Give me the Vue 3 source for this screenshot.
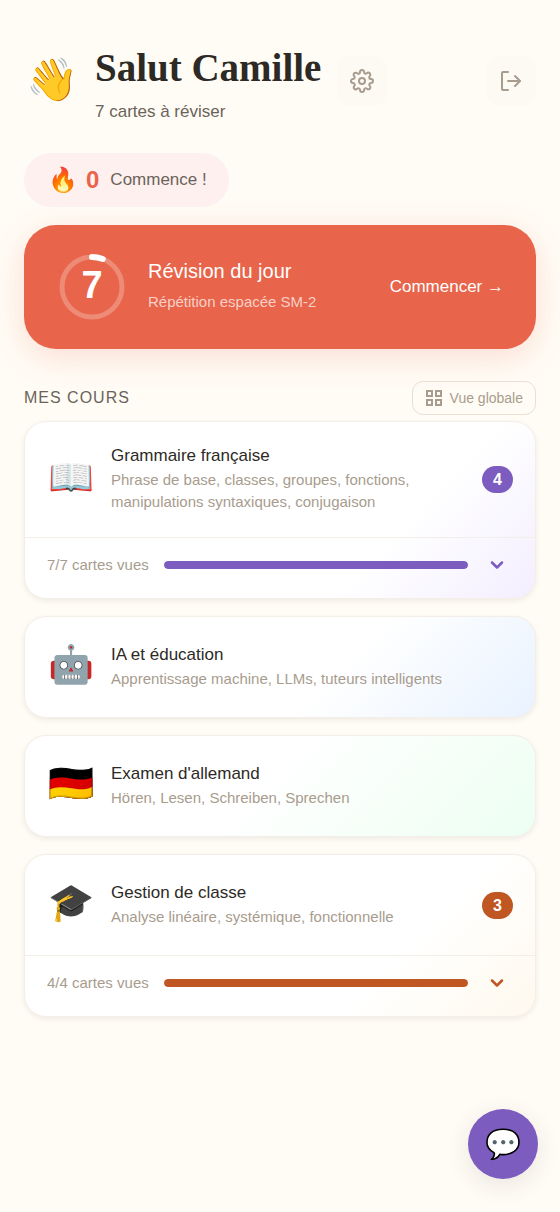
<template>
  <div class="dashboard">
    <!-- En-tête -->
    <header class="header">
      <span class="header-emoji" aria-hidden="true">👋</span>
      <div class="header-text">
        <h1 class="greeting">Salut {{ userName }}</h1>
        <p class="due-count">{{ dueCount }} cartes à réviser</p>
      </div>
      <button class="icon-button" type="button" aria-label="Paramètres">
        <svg width="24" height="24" viewBox="0 0 24 24" fill="none" stroke="currentColor" stroke-width="2" stroke-linecap="round" stroke-linejoin="round">
          <circle cx="12" cy="12" r="3"></circle>
          <path d="M19.4 15a1.65 1.65 0 0 0 .33 1.82l.06.06a2 2 0 0 1 0 2.83 2 2 0 0 1-2.83 0l-.06-.06a1.65 1.65 0 0 0-1.82-.33 1.65 1.65 0 0 0-1 1.51V21a2 2 0 0 1-2 2 2 2 0 0 1-2-2v-.09A1.65 1.65 0 0 0 9 19.4a1.65 1.65 0 0 0-1.82.33l-.06.06a2 2 0 0 1-2.83 0 2 2 0 0 1 0-2.83l.06-.06a1.65 1.65 0 0 0 .33-1.82 1.65 1.65 0 0 0-1.51-1H3a2 2 0 0 1-2-2 2 2 0 0 1 2-2h.09A1.65 1.65 0 0 0 4.6 9a1.65 1.65 0 0 0-.33-1.82l-.06-.06a2 2 0 0 1 0-2.83 2 2 0 0 1 2.83 0l.06.06a1.65 1.65 0 0 0 1.82.33H9a1.65 1.65 0 0 0 1-1.51V3a2 2 0 0 1 2-2 2 2 0 0 1 2 2v.09a1.65 1.65 0 0 0 1 1.51 1.65 1.65 0 0 0 1.82-.33l.06-.06a2 2 0 0 1 2.83 0 2 2 0 0 1 0 2.83l-.06.06a1.65 1.65 0 0 0-.33 1.82V9a1.65 1.65 0 0 0 1.51 1H21a2 2 0 0 1 2 2 2 2 0 0 1-2 2h-.09a1.65 1.65 0 0 0-1.51 1z"></path>
        </svg>
      </button>
      <button class="icon-button logout" type="button" aria-label="Déconnexion">
        <svg width="24" height="24" viewBox="0 0 24 24" fill="none" stroke="currentColor" stroke-width="2" stroke-linecap="round" stroke-linejoin="round">
          <path d="M9 21H4a1 1 0 0 1-1-1V4a1 1 0 0 1 1-1h5"></path>
          <polyline points="16 7 21 12 16 17"></polyline>
          <line x1="21" y1="12" x2="9" y2="12"></line>
        </svg>
      </button>
    </header>

    <!-- Série de jours -->
    <div class="streak">
      <span class="streak-emoji" aria-hidden="true">🔥</span>
      <strong class="streak-count">{{ streak }}</strong>
      <span class="streak-label">Commence !</span>
    </div>

    <!-- Révision du jour -->
    <button class="review" type="button">
      <span class="ring">
        <svg class="ring-svg" viewBox="0 0 72 72" fill="none" stroke-width="5">
          <circle cx="36" cy="36" r="30" stroke="rgba(255, 255, 255, 0.25)"></circle>
          <circle cx="36" cy="36" r="30" stroke="#fff" stroke-width="6" stroke-linecap="round" stroke-dasharray="11 189" transform="rotate(-90 36 36)"></circle>
        </svg>
        <span class="ring-count">{{ dueCount }}</span>
      </span>
      <span class="review-text">
        <span class="review-title">Révision du jour</span>
        <span class="review-subtitle">Répétition espacée SM-2</span>
      </span>
      <span class="review-action">Commencer →</span>
    </button>

    <!-- Liste des cours -->
    <section class="courses">
      <div class="section-header">
        <h2 class="section-title">Mes cours</h2>
        <button class="overview-button" type="button">
          <svg width="20" height="20" viewBox="0 0 20 20" fill="none" stroke="currentColor" stroke-width="2">
            <rect x="3" y="3" width="5" height="5"></rect>
            <rect x="12" y="3" width="5" height="5"></rect>
            <rect x="3" y="12" width="5" height="5"></rect>
            <rect x="12" y="12" width="5" height="5"></rect>
          </svg>
          <span>Vue globale</span>
        </button>
      </div>

      <div class="course-list">
        <article v-for="course in courses" :key="course.id" class="course-card" :class="course.id">
          <a class="course-main" href="#">
            <span class="course-emoji" aria-hidden="true">{{ course.emoji }}</span>
            <span class="course-text">
              <span class="course-name">{{ course.name }}</span>
              <span class="course-description">{{ course.description }}</span>
            </span>
            <span v-if="course.due" class="course-badge">{{ course.due }}</span>
          </a>
          <div v-if="course.total" class="course-footer">
            <span class="course-seen">{{ course.seen }}/{{ course.total }} cartes vues</span>
            <div class="progress">
              <div class="progress-fill" :style="{ width: progress(course) }"></div>
            </div>
            <button class="expand-button" type="button" aria-label="Afficher le détail">
              <svg width="20" height="20" viewBox="0 0 24 24" fill="none" stroke="currentColor" stroke-width="3" stroke-linecap="round" stroke-linejoin="round">
                <polyline points="6 9 12 15 18 9"></polyline>
              </svg>
            </button>
          </div>
        </article>
      </div>
    </section>

    <button class="chat-button" type="button" aria-label="Ouvrir la discussion">💬</button>
  </div>
</template>

<script setup>
import { ref } from 'vue'

const userName = ref('Camille')
const dueCount = ref(7)
const streak = ref(0)

const courses = ref([
  {
    id: 'grammaire',
    emoji: '📖',
    name: 'Grammaire française',
    description: 'Phrase de base, classes, groupes, fonctions, manipulations syntaxiques, conjugaison',
    due: 4,
    seen: 7,
    total: 7
  },
  {
    id: 'ia',
    emoji: '🤖',
    name: 'IA et éducation',
    description: 'Apprentissage machine, LLMs, tuteurs intelligents'
  },
  {
    id: 'allemand',
    emoji: '🇩🇪',
    name: "Examen d'allemand",
    description: 'Hören, Lesen, Schreiben, Sprechen'
  },
  {
    id: 'gestion',
    emoji: '🎓',
    name: 'Gestion de classe',
    description: 'Analyse linéaire, systémique, fonctionnelle',
    due: 3,
    seen: 4,
    total: 4
  }
])

// Pourcentage de cartes déjà vues
const progress = (course) => `${(course.seen / course.total) * 100}%`
</script>

<style>
body {
  margin: 0;
  background: #fffcf5;
}
</style>

<style scoped>
.dashboard {
  min-height: 100vh;
  padding: 44px 24px 120px;
  box-sizing: border-box;
  font-family: 'Liberation Sans', Arial, sans-serif;
  color: #2d2a26;
}

button {
  font-family: inherit;
  cursor: pointer;
}

/* En-tête */
.header {
  display: flex;
  align-items: flex-start;
  gap: 16px;
}

.header-emoji {
  width: 55px;
  font-size: 42px;
  line-height: 72px;
  text-align: center;
}

.greeting {
  margin: 0;
  font-family: 'Liberation Serif', 'Times New Roman', serif;
  font-size: 39px;
  font-weight: 700;
  line-height: 48px;
}

.due-count {
  margin: 8px 0 0;
  font-size: 17px;
  line-height: 24px;
  color: #6b635a;
}

.icon-button {
  display: flex;
  align-items: center;
  justify-content: center;
  width: 50px;
  height: 50px;
  margin-top: 12px;
  padding: 0;
  border: none;
  border-radius: 14px;
  background: #fdf9f3;
  color: #a89c8e;
}

.logout {
  margin-left: auto;
}

/* Série */
.streak {
  display: inline-flex;
  align-items: center;
  gap: 11px;
  height: 54px;
  margin-top: 29px;
  padding: 0 22px 0 24px;
  border-radius: 27px;
  background: #fef0ee;
}

.streak-emoji {
  width: 27px;
  font-size: 24px;
  line-height: 28px;
  text-align: center;
}

.streak-count {
  font-size: 24px;
  line-height: 28px;
  color: #e8644a;
}

.streak-label {
  font-size: 17px;
  line-height: 24px;
  color: #6b635a;
}

/* Carte de révision */
.review {
  display: flex;
  align-items: center;
  gap: 20px;
  width: 100%;
  margin-top: 18px;
  padding: 26px 32px;
  border: none;
  border-radius: 32px;
  background: #e8644a;
  box-shadow: 0 8px 32px rgba(232, 100, 74, 0.2);
  color: #fff;
  text-align: left;
}

.ring {
  display: grid;
  place-items: center;
  width: 72px;
  height: 72px;
}

.ring-svg,
.ring-count {
  grid-area: 1 / 1;
}

.ring-svg {
  width: 72px;
  height: 72px;
}

.ring-count {
  padding-bottom: 4px;
  font-size: 38px;
  font-weight: 700;
  line-height: 42px;
}

.review-text {
  display: flex;
  flex: 1;
  flex-direction: column;
  gap: 8px;
  padding-bottom: 2px;
}

.review-title {
  font-size: 20px;
  line-height: 24px;
}

.review-subtitle {
  font-size: 15px;
  line-height: 22px;
  color: rgba(255, 255, 255, 0.7);
}

.review-action {
  font-size: 17px;
  line-height: 24px;
}

/* Section des cours */
.section-header {
  display: flex;
  align-items: center;
  justify-content: space-between;
  margin-top: 32px;
}

.section-title {
  margin: 0;
  font-size: 16px;
  font-weight: 400;
  letter-spacing: 1px;
  text-transform: uppercase;
  color: #6b635a;
}

.overview-button {
  display: flex;
  align-items: center;
  gap: 6px;
  height: 34px;
  padding: 0 12px 0 11px;
  border: 1px solid #e8e0d5;
  border-radius: 11px;
  background: transparent;
  font-size: 14px;
  color: #a89c8e;
}

.course-list {
  display: flex;
  flex-direction: column;
  gap: 17px;
  margin-top: 6px;
}

.course-card {
  overflow: hidden;
  border: 1px solid #f3eee7;
  border-radius: 22px;
  box-shadow: 0 2px 5px rgba(45, 42, 38, 0.08);
}

.grammaire {
  --accent: #7c5cbf;
  background: linear-gradient(135deg, #fff 70%, #f3eeff 100%);
}

.ia {
  background: linear-gradient(135deg, #fff 60%, #e8f2ff 100%);
}

.allemand {
  background: linear-gradient(135deg, #fff 45%, #edfff2 100%);
}

.gestion {
  --accent: #c05621;
  background: linear-gradient(135deg, #fff 70%, #fff9ee 100%);
}

.course-main {
  display: flex;
  align-items: center;
  gap: 17px;
  min-height: 56px;
  padding: 22px;
  color: inherit;
  text-decoration: none;
}

.course-emoji {
  width: 47px;
  padding-bottom: 4px;
  font-size: 37px;
  line-height: 44px;
  text-align: center;
}

.course-text {
  display: flex;
  flex: 1;
  flex-direction: column;
  gap: 1px;
  padding-bottom: 2px;
}

.course-name {
  font-size: 17px;
  line-height: 24px;
}

.course-description {
  max-width: 340px;
  font-size: 15px;
  line-height: 22px;
  color: #a89c8e;
}

.course-badge {
  min-width: 31px;
  border-radius: 14px;
  background: var(--accent);
  font-size: 16px;
  font-weight: 700;
  line-height: 27px;
  color: #fff;
  text-align: center;
}

.course-footer {
  display: flex;
  align-items: center;
  gap: 12px;
  padding: 10px 22px 17px;
  border-top: 1px solid #f3eee7;
}

.course-seen {
  min-width: 105px;
  font-size: 15px;
  line-height: 22px;
  color: #a89c8e;
}

.progress {
  flex: 1;
  height: 8px;
  overflow: hidden;
  border-radius: 4px;
  background: #f3eee7;
}

.progress-fill {
  height: 100%;
  border-radius: 4px;
  background: var(--accent);
}

.expand-button {
  display: flex;
  align-items: center;
  justify-content: center;
  width: 33px;
  height: 33px;
  padding: 0;
  border: none;
  background: none;
  color: var(--accent);
}

/* Bouton de discussion */
.chat-button {
  position: fixed;
  right: 22px;
  bottom: 33px;
  width: 70px;
  height: 70px;
  padding: 0;
  border: none;
  border-radius: 50%;
  background: #7c5cbf;
  box-shadow: 0 6px 24px rgba(45, 42, 38, 0.1);
  font-size: 29px;
  line-height: 70px;
}
</style>
